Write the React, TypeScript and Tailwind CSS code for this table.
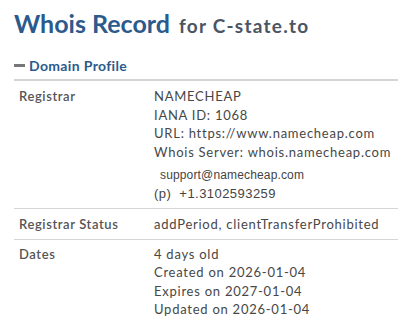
import React from "react";

const rows = [
  {
    label: "Registrar",
    lines: [
      "NAMECHEAP",
      "IANA ID: 1068",
      "URL: https://www.namecheap.com",
      "Whois Server: whois.namecheap.com",
    ],
    extra: true,
  },
  { label: "Registrar Status", lines: ["addPeriod, clientTransferProhibited"] },
  {
    label: "Dates",
    lines: [
      "4 days old",
      "Created on 2026-01-04",
      "Expires on 2027-01-04",
      "Updated on 2026-01-04",
    ],
  },
];

const App: React.FC = () => {
  return (
    <div className="w-[398px] h-[318px] bg-white overflow-hidden pl-[14px] font-['Lato',sans-serif]">
      {/* Title */}
      <h1 className="pt-[7px] h-[39px] flex items-baseline gap-[9px] leading-[32px] font-bold">
        <span className="text-[25px] text-[#2c5a8c]">Whois Record</span>
        <span className="text-[19px] leading-none tracking-[1.25px] text-[#4b5563]">for C-state.to</span>
      </h1>

      {/* Section header */}
      <div className="mt-[16px] flex items-center gap-[4px] h-[20px]">
        <span className="w-[11px] h-[3px] bg-[#777]" />
        <span className="text-[14px] font-bold tracking-[0.35px] text-[#2c5a8c]">Domain Profile</span>
      </div>
      <div className="mt-[4px] h-[2px] bg-[#d8d4d4]" />

      {/* Table */}
      <div className="text-[13px] text-[#474747] leading-[18.5px] tracking-[0.75px]">
        {rows.map((row, i) => (
          <div
            key={row.label}
            className={`flex pb-[5px] ${i === rows.length - 1 ? "pt-[5px]" : "pt-[6px] border-b border-[#d4d8d4]"}`}
          >
            <div className="w-[140px] pl-[5px] font-semibold tracking-[0.6px] text-[#555]">{row.label}</div>
            <div>
              {row.lines.map((l) => (
                <div key={l}>{l}</div>
              ))}
              {row.extra && (
                <div className="font-['Arial','Liberation_Sans',sans-serif] text-[#444]">
                  <div className="pl-[6px] pt-[5px] leading-[19px] text-[12px] tracking-[0.15px]">
                    support@namecheap.com
                  </div>
                  <div className="leading-[18px] tracking-[0.45px] whitespace-pre">(p)  +1.3102593259</div>
                </div>
              )}
            </div>
          </div>
        ))}
      </div>
    </div>
  );
};

export default App;
